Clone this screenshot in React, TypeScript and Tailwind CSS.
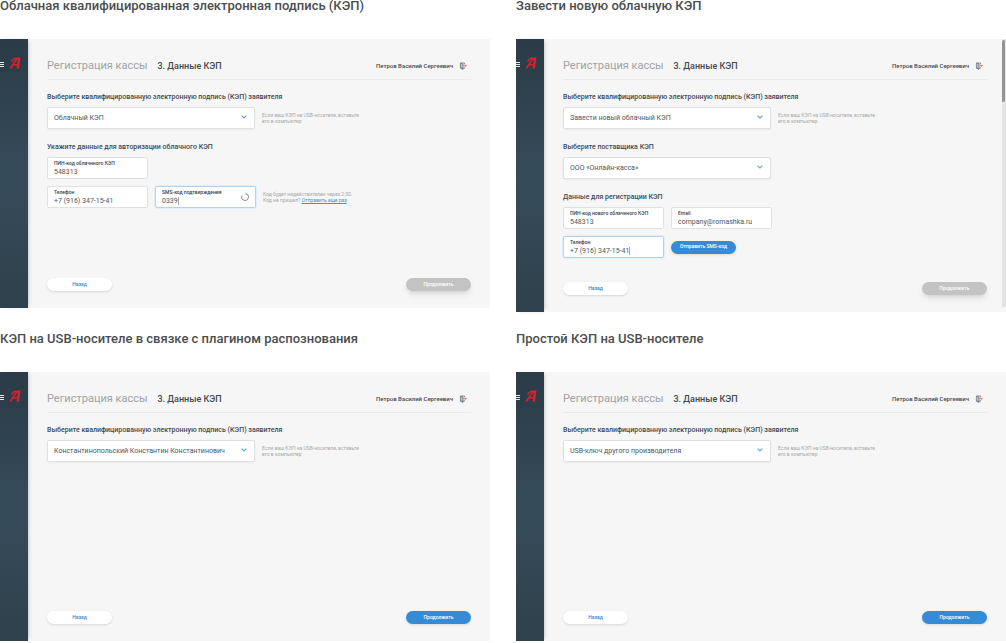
import { ReactNode, useId } from "react";

interface SelectFieldProps {
  label: string;
  options: string[];
  hint?: string;
}

interface TextFieldProps {
  label: string;
  value: string;
  type?: string;
  active?: boolean;
  loading?: boolean;
}

interface ScreenProps {
  title: string;
  canContinue?: boolean;
  scrollable?: boolean;
  children: ReactNode;
}

const SIGNATURE_LABEL = "Выберите квалифицированную электронную подпись (КЭП) заявителя";
const USB_HINT = "Если ваш КЭП на USB-носителе, вставьте его в компьютер";

function Logo() {
  return (
    <svg viewBox="0 0 12 12" className="h-3 w-3" aria-hidden="true">
      <path
        d="M0.2 11.6H2.3L4.2 8.6H7.9L7.6 11.6H10L11.5 0.5H7.6C4.6 0.6 2.6 2 2.1 4.8H3.6C4 3.2 5 2.3 6.6 2.2L0.2 11.6ZM5.2 7L8.7 2.1L8.1 7Z"
        fill="#dc1f2e"
        fillRule="evenodd"
      />
    </svg>
  );
}

function Sidebar() {
  return (
    <aside className="flex w-7 shrink-0 items-start bg-linear-to-b from-[#2b3b47] via-[#364b5a] to-[#2f414c] pt-[18px] shadow-[2px_0_4px_-2px_rgba(40,60,75,0.35)]">
      <button type="button" aria-label="Меню" className="mt-[5px] mr-[5px] flex w-1 flex-col gap-px">
        <span className="h-px w-full bg-gray-200" />
        <span className="h-px w-full bg-gray-200" />
        <span className="h-px w-full bg-gray-200" />
      </button>
      <Logo />
    </aside>
  );
}

function LogoutIcon() {
  return (
    <svg viewBox="0 0 8 8" className="h-2 w-2" fill="none" aria-hidden="true">
      <path d="M1.6 1.2L4 2V7.4L1.6 6.2Z" fill="#b9bfc4" />
      <path d="M5.6 2.2V1H1.4V6.2H5.6V5.4M1.6 1.1L4 2V7.4L1.6 6.2" stroke="#6b767e" strokeWidth="0.8" />
      <path d="M4.6 3.7H7.2M6.2 2.7L7.2 3.7L6.2 4.7" stroke="#d8505a" strokeWidth="0.8" />
    </svg>
  );
}

function SectionLabel({ children, htmlFor }: { children: ReactNode; htmlFor?: string }) {
  const style = "mb-[5px] block text-[7px] leading-[10px] font-medium text-[#3c4a55]";

  if (htmlFor) {
    return <label htmlFor={htmlFor} className={style}>{children}</label>;
  }
  return <h3 className={style}>{children}</h3>;
}

function SelectField({ label, options, hint }: SelectFieldProps) {
  const id = useId();

  return (
    <div>
      <SectionLabel htmlFor={id}>{label}</SectionLabel>

      <div className="flex items-center gap-[7px]">
        <div className="relative w-[208px]">
          <select
            id={id}
            className="block h-[22px] w-full appearance-none rounded-xs border border-[#dde1e4] bg-white px-1.5 text-[7px] text-[#4a5761] shadow-xs outline-none"
          >
            {options.map((option) => (
              <option key={option}>{option}</option>
            ))}
          </select>
          <svg viewBox="0 0 6 4" className="pointer-events-none absolute top-2 right-2 h-1 w-1.5" aria-hidden="true">
            <path d="M0.6 0.6L3 3L5.4 0.6" fill="none" stroke="#5aa9cf" strokeWidth="1.1" />
          </svg>
        </div>
        {hint && <p className="w-[104px] text-[5px] leading-[6px] text-[#a5a9ac]">{hint}</p>}
      </div>
    </div>
  );
}

function TextField({ label, value, type = "text", active, loading }: TextFieldProps) {
  const id = useId();

  return (
    <div
      className={`flex h-[22px] w-[101px] items-center rounded-xs border bg-white px-1.5 ${
        active ? "border-[#b4d2ec] ring-1 ring-[#e2eef9]" : "border-[#dde1e4]"
      }`}
    >
      <div className="flex-1">
        <label htmlFor={id} className="block text-[5px] leading-[7px] font-medium text-[#36424b]">
          {label}
        </label>
        <div className="flex h-2.5 items-center">
          <input
            id={id}
            type={type}
            defaultValue={value}
            className="field-sizing-content text-[7px] leading-[10px] text-[#4a5761] outline-none"
          />
          {active && <span className="h-2 w-px bg-[#a2aab1]" />}
        </div>
      </div>

      {loading && (
        <svg viewBox="0 0 8 8" className="h-2 w-2" aria-hidden="true">
          <path d="M4.6 0.8A3.3 3.3 0 1 1 1 2.8" fill="none" stroke="#67737c" strokeWidth="0.9" />
        </svg>
      )}
    </div>
  );
}

function Screen({ title, canContinue, scrollable, children }: ScreenProps) {
  return (
    <section>
      <h2 className="mb-[27px] text-[13px] leading-3 font-medium whitespace-nowrap text-[#4b4d4f]">{title}</h2>

      <div className={`relative flex bg-[#f6f6f6] ${scrollable ? "min-h-[273px]" : "min-h-[269px]"}`}>
        <Sidebar />

        <div className="flex flex-1 flex-col px-[19px] pb-[17px]">
          <header className="flex h-[41px] items-center border-b border-[#e8eaeb] pt-3.5">
            <h1 className="text-[11px] leading-4 text-[#a0a2a4]">Регистрация кассы</h1>
            <span className="ml-2.5 text-[9px] leading-4 font-medium text-[#45494d]">3. Данные КЭП</span>
            <span className="ml-auto text-[6px] leading-4 font-medium text-[#3c4a55]">Петров Василий Сергеевич</span>
            <button type="button" aria-label="Выйти" className="mr-1 ml-1.5">
              <LogoutIcon />
            </button>
          </header>

          <form className="flex flex-1 flex-col gap-[13px] pt-3">
            {children}

            <div className="mt-auto flex justify-between">
              <button
                type="button"
                className="h-[13px] w-[65px] rounded-full bg-white text-[5px] font-medium text-[#3489cf] shadow-sm"
              >
                Назад
              </button>
              <button
                type="button"
                disabled={!canContinue}
                className="h-[13px] w-[65px] rounded-full bg-[#368bd6] text-[5px] font-medium text-white shadow-sm disabled:bg-[#c3c3c3] disabled:shadow-md"
              >
                Продолжить
              </button>
            </div>
          </form>
        </div>

        {scrollable && (
          <div className="absolute top-0 right-0 h-[268px] w-1 bg-[#e4e4e4]">
            <div className="mt-px mr-px h-[62px] rounded-full bg-[#949494]" />
          </div>
        )}
      </div>
    </section>
  );
}

export default function App() {
  return (
    <main className="grid grid-cols-2 gap-x-[26px] gap-y-[21px] bg-white font-[Roboto,sans-serif]">
      <Screen title="Облачная квалифицированная электронная подпись (КЭП)">
        <SelectField label={SIGNATURE_LABEL} options={["Облачный КЭП"]} hint={USB_HINT} />

        <div>
          <SectionLabel>Укажите данные для авторизации облачного КЭП</SectionLabel>
          <div className="flex flex-col gap-[7px]">
            <TextField label="ПИН-код облачнного КЭП" value="548313" />
            <div className="flex items-center gap-[7px]">
              <TextField label="Телефон" value="+7 (916) 347-15-41" type="tel" />
              <TextField label="SMS-код подтверждения" value="0339" active loading />
              <p className="text-[5px] leading-[6px] text-[#a5a9ac]">
                Код будет недействителен через 2:00.
                <br />
                Код не пришел?{" "}
                <a href="#" className="text-[#3f94d6] underline">Отправить еще раз</a>
              </p>
            </div>
          </div>
        </div>
      </Screen>

      <Screen title="Завести новую облачную КЭП" scrollable>
        <SelectField label={SIGNATURE_LABEL} options={["Завести новый облачный КЭП"]} hint={USB_HINT} />
        <SelectField label="Выберите поставщика КЭП" options={["ООО «Онлайн-касса»"]} />

        <div>
          <SectionLabel>Данные для регистрации КЭП</SectionLabel>
          <div className="flex flex-col gap-[7px]">
            <div className="flex gap-[7px]">
              <TextField label="ПИН-код нового облачнного КЭП" value="548313" />
              <TextField label="Email" value="company@romashka.ru" type="email" />
            </div>
            <div className="flex items-center gap-[7px]">
              <TextField label="Телефон" value="+7 (916) 347-15-41" type="tel" active />
              <button
                type="button"
                className="h-[13px] w-[65px] rounded-full bg-[#368bd6] text-[5px] font-medium text-white shadow-sm"
              >
                Отправить SMS-код
              </button>
            </div>
          </div>
        </div>
      </Screen>

      <Screen title="КЭП на USB-носителе в связке с плагином распознования" canContinue>
        <SelectField label={SIGNATURE_LABEL} options={["Константинопольский Константин Константинович"]} hint={USB_HINT} />
      </Screen>

      <Screen title="Простой КЭП на USB-носителе" canContinue>
        <SelectField label={SIGNATURE_LABEL} options={["USB-ключ другого производителя"]} hint={USB_HINT} />
      </Screen>
    </main>
  );
}
